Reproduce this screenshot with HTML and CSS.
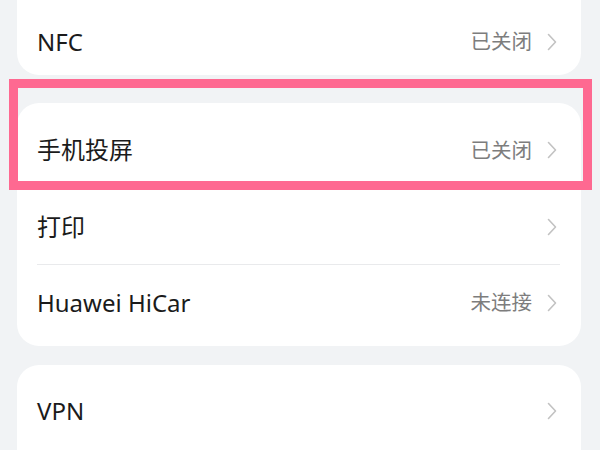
FILE: index.html
```html
<!DOCTYPE html>
<html lang="zh-CN">
<head>
<meta charset="utf-8">
<link rel="stylesheet" href="styles.css">
</head>
<body>
<div class="screen">
  <div class="card card-top">
    <div class="row row-short">
      <span class="label">NFC</span>
      <span class="value">已关闭</span>
      <svg class="chev" viewBox="0 0 10 18"><polyline points="1.5,1.5 8.5,9 1.5,16.5"/></svg>
    </div>
  </div>
  <div class="card card-mid">
    <div class="row">
      <span class="label">手机投屏</span>
      <span class="value">已关闭</span>
      <svg class="chev" viewBox="0 0 10 18"><polyline points="1.5,1.5 8.5,9 1.5,16.5"/></svg>
    </div>
    <div class="row">
      <span class="label">打印</span>
      <svg class="chev" viewBox="0 0 10 18"><polyline points="1.5,1.5 8.5,9 1.5,16.5"/></svg>
    </div>
    <div class="row">
      <span class="label">Huawei HiCar</span>
      <span class="value">未连接</span>
      <svg class="chev" viewBox="0 0 10 18"><polyline points="1.5,1.5 8.5,9 1.5,16.5"/></svg>
    </div>
  </div>
  <div class="card card-last">
    <div class="row">
      <span class="label">VPN</span>
      <svg class="chev" viewBox="0 0 10 18"><polyline points="1.5,1.5 8.5,9 1.5,16.5"/></svg>
    </div>
  </div>
  <div class="highlight"></div>
</div>
</body>
</html>
```

FILE: styles.css
```css
html, body {
  margin: 0;
  padding: 0;
  background: #f1f3f5;
  width: 600px;
  height: 450px;
  overflow: hidden;
}

.screen {
  position: relative;
  width: 600px;
  height: 450px;
  padding: 0 19px 0 17px;
  box-sizing: border-box;
  overflow: hidden;
  font-family: "Noto Sans", "Noto Sans CJK SC", sans-serif;
}

.card {
  background: #ffffff;
  border-radius: 22px;
}

.card-top {
  border-radius: 0 0 22px 22px;
  padding-top: 8px;
}

.card-mid {
  margin-top: 28px;
  padding: 9px 0 6px;
}

.card-last {
  margin-top: 19px;
  padding-top: 8px;
  height: 85px;
  box-sizing: border-box;
  border-radius: 22px 22px 0 0;
}

.row {
  display: flex;
  align-items: center;
  height: 76px;
  margin: 0 21px 0 20px;
  padding-right: 3px;
  box-sizing: border-box;
}

.row + .row {
  border-top: 1px solid #e9eaec;
}

.row-short {
  height: 67px;
}

.label {
  flex: 1;
  font-size: 24px;
  color: #1b1b1b;
  line-height: 1;
}

.value {
  font-size: 20.5px;
  color: #7d7d7d;
  margin-right: 15px;
  line-height: 1;
}

.chev {
  width: 10px;
  height: 18px;
  fill: none;
  stroke: #c2c2c2;
  stroke-width: 1.6;
  stroke-linecap: round;
  stroke-linejoin: round;
}

.highlight {
  position: absolute;
  left: 9px;
  top: 79px;
  width: 583px;
  height: 111px;
  border: 9px solid #fe6991;
  box-sizing: border-box;
}
```
